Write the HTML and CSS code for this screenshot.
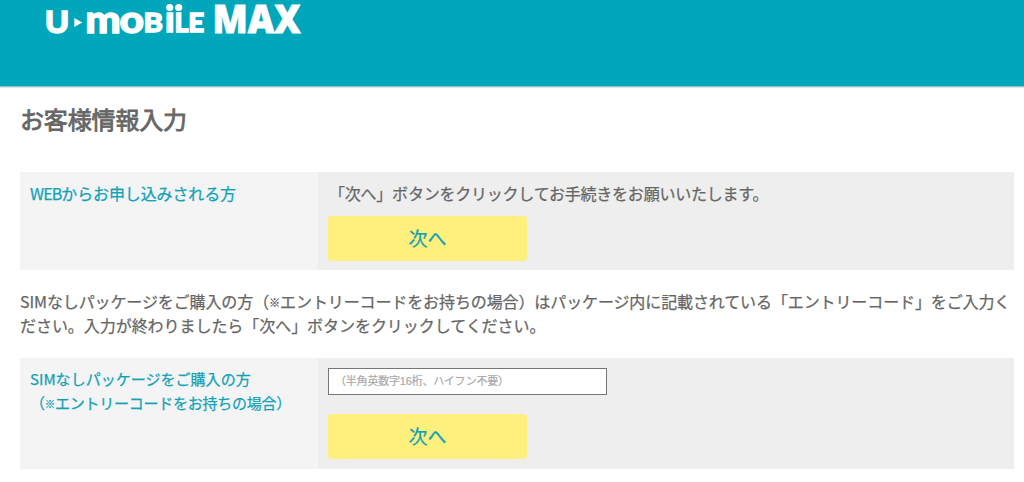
FILE: index.html
```html
<!DOCTYPE html>
<html lang="ja">
<head>
<meta charset="utf-8">
<title>お客様情報入力</title>
<link rel="stylesheet" href="styles.css">
</head>
<body>
<header class="site-header">
  <svg class="logo" width="270" height="40" viewBox="40 0 270 40" role="img" aria-label="U-mobile MAX">
    <g class="logo-small">
      <text x="44.8" y="33.2" font-size="31" textLength="24.5" lengthAdjust="spacingAndGlyphs">U</text>
      <path class="plain" d="M74.3 18 L82.3 22.5 L74.3 27 Z"/>
      <text x="85.3" y="32.5" font-size="38" textLength="35.5" lengthAdjust="spacingAndGlyphs">m</text>
      <text x="119.4" y="32.7" font-size="38" textLength="24.5" lengthAdjust="spacingAndGlyphs">o</text>
      <text x="143.6" y="32.4" font-size="27" textLength="19.5" lengthAdjust="spacingAndGlyphs">B</text>
      <text x="164.7" y="32.4" font-size="36" textLength="10" lengthAdjust="spacingAndGlyphs">ı</text>
      <circle class="plain" cx="169.7" cy="7.5" r="3.6"/>
      <text x="174.6" y="32.4" font-size="27" textLength="14" lengthAdjust="spacingAndGlyphs">L</text>
      <circle class="plain" cx="178.7" cy="7.5" r="3.6"/>
      <text x="188.3" y="32.4" font-size="27" textLength="16" lengthAdjust="spacingAndGlyphs">E</text>
    </g>
    <text class="logo-max" x="212.5" y="32.8" font-size="38" textLength="88" lengthAdjust="spacingAndGlyphs">MAX</text>
  </svg>
</header>
<main class="content">
  <h1 class="title">お客様情報入力</h1>
  <section class="row row-web">
    <div class="label"><span class="latin">WEB</span>からお申し込みされる方</div>
    <div class="field">
      <p class="guide">「次へ」ボタンをクリックしてお手続きをお願いいたします。</p>
      <button class="next" type="button">次へ</button>
    </div>
  </section>
  <p class="note"><span class="note-first">SIMなしパッケージをご購入の方（<span class="mark">※</span>エントリーコードをお持ちの場合）はパッケージ内に記載されている「エントリーコード」をご入力く</span><br>ださい。入力が終わりましたら「次へ」ボタンをクリックしてください。</p>
  <section class="row row-code">
    <div class="label label-tight">SIMなしパッケージをご購入の方<br><span class="label-sub">（<span class="mark">※</span>エントリーコードをお持ちの場合）</span></div>
    <div class="field">
      <input class="code" type="text" placeholder="（半角英数字16桁、ハイフン不要）">
      <button class="next" type="button">次へ</button>
    </div>
  </section>
</main>
</body>
</html>
```
FILE: styles.css
```css
* { box-sizing: border-box; }
body {
  margin: 0;
  overflow: hidden;
  background: #fff;
  color: #666;
  font: 16px/24px "Noto Sans CJK JP", sans-serif;
  letter-spacing: -0.05px;
  -webkit-text-stroke: 0.25px currentColor;
}
.site-header {
  height: 87px;
  padding-left: 40px;
  background: #00a7bb;
  border-bottom: 1px solid #8cc6cf;
  box-shadow: 0 1px 1px #e4e4e4;
}
.logo { display: block; fill: #fff; -webkit-text-stroke: 0; }
.logo-small { font-family: Lato, sans-serif; font-weight: 900; letter-spacing: 0; stroke: #fff; stroke-width: 1.3px; }
.logo-max { font-family: "Open Sans", sans-serif; font-weight: 800; letter-spacing: 0; stroke: #fff; stroke-width: 0.8px; }
.plain { stroke: none; }
.content { padding: 14px 10px 0 20px; }
.title {
  height: 36px;
  margin: 0 0 35px;
  font-size: 24px;
  line-height: 36px;
  font-weight: 400;
  letter-spacing: -0.15px;
  -webkit-text-stroke: 0.8px currentColor;
}
.row { display: grid; grid-template-columns: 298px 1fr; }
.row-web { height: 98px; }
.row-code { height: 111px; }
.label { padding: 9px 10px; background: #f4f4f4; color: #10a2b7; white-space: nowrap; letter-spacing: -0.12px; }
.label-tight { font-size: 15px; letter-spacing: 0.03px; }
.label-sub { letter-spacing: -0.25px; }
.latin { letter-spacing: -0.9px; }
.mark { font-size: 0.7em; line-height: 1; vertical-align: 1px; }
.field { padding: 9px 10px 8px; background: #eee; }
.guide { margin: 0 0 11px; letter-spacing: -0.22px; text-indent: 1px; }
.next {
  display: block;
  width: 199px;
  height: 45px;
  padding: 0 0 2px;
  border: 0;
  border-radius: 4px;
  background: #ffef7d;
  color: #10a2b7;
  font: 19px/43px "Noto Sans CJK JP", sans-serif;
  -webkit-text-stroke: 0.25px currentColor;
}
.note { margin: 19px 0 21px; white-space: nowrap; }
.note-first { letter-spacing: -0.11px; }
.code {
  display: block;
  width: 279px;
  height: 27px;
  margin-bottom: 19px;
  padding: 0 6px 1px;
  border: 1px solid #777;
  background: #fff;
  font: 11px/16px "Liberation Sans", "Noto Sans CJK JP", sans-serif;
  letter-spacing: -0.2px;
  -webkit-text-stroke: 0.2px #a9a9a9;
}
.row-code .field { padding-top: 10px; }
.code::placeholder { color: #a9a9a9; opacity: 1; }
```
